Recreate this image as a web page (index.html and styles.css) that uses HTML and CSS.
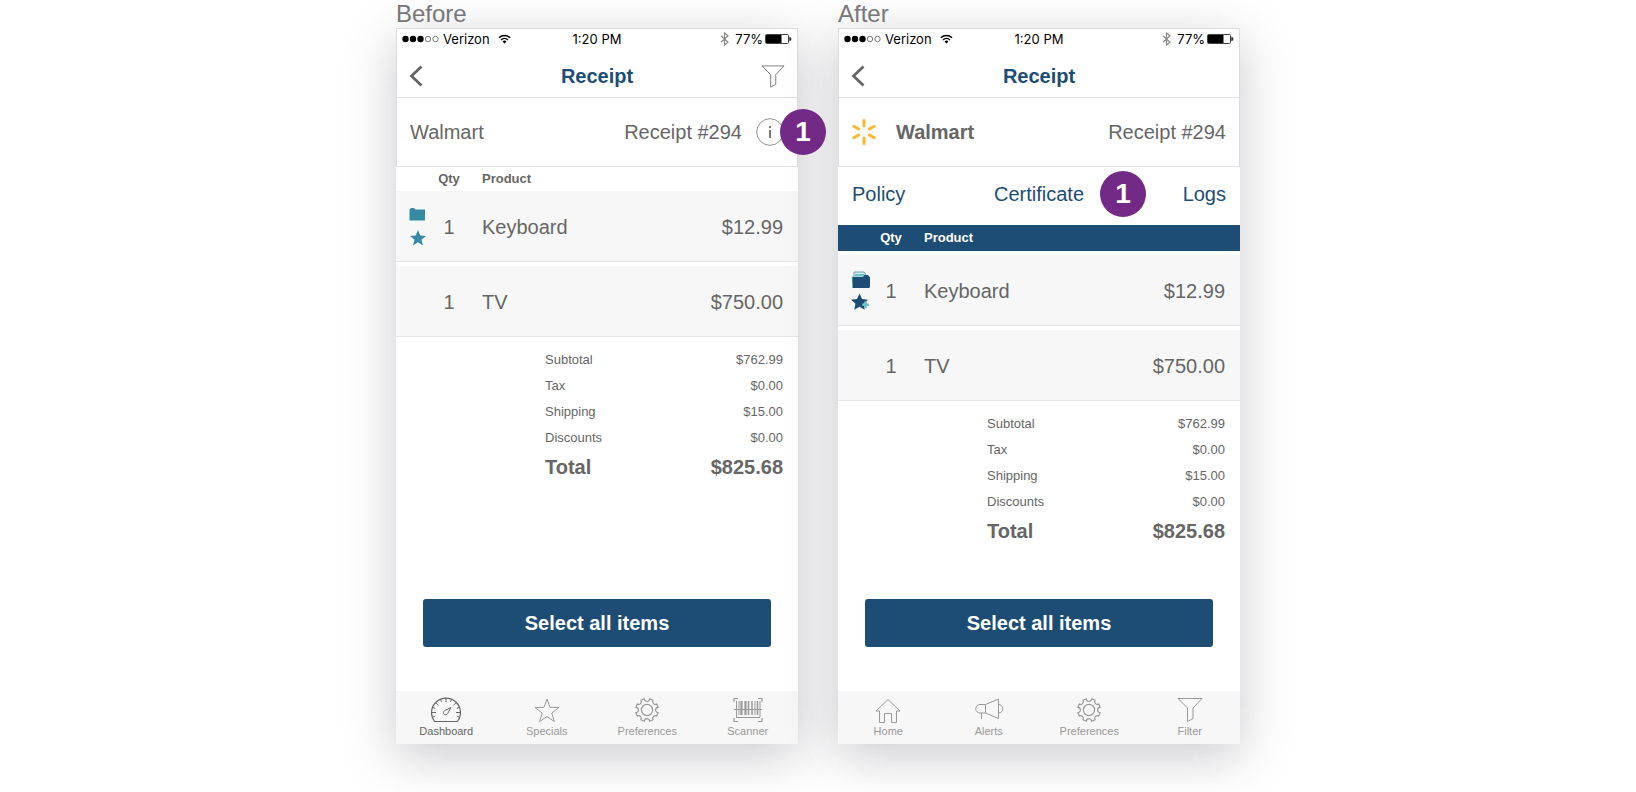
FILE: index.html
```
<!DOCTYPE html>
<html lang="en">

<head>
    <meta charset="UTF-8">
    <meta name="viewport" content="width=device-width, initial-scale=1.0">
    <title>Receipt - Before / After</title>
    <link rel="stylesheet" href="styles.css">
</head>

<body>
    <!-- Shared icons -->
    <svg class="sprite" aria-hidden="true">
        <symbol id="signal" viewBox="0 0 37 8">
            <g fill="#000">
                <circle cx="3.5" cy="4" r="3.2" />
                <circle cx="11" cy="4" r="3.2" />
                <circle cx="18.5" cy="4" r="3.2" />
            </g>
            <g fill="none" stroke="#555" stroke-width="0.8">
                <circle cx="26" cy="4" r="2.7" />
                <circle cx="33.5" cy="4" r="2.7" />
            </g>
        </symbol>
        <symbol id="wifi" viewBox="0 0 14 10">
            <g fill="none" stroke="#000" stroke-width="1.6">
                <path d="M1 3.6a8.6 8.6 0 0 1 12 0" />
                <path d="M3.3 6a5.4 5.4 0 0 1 7.4 0" />
            </g>
            <path d="M7 9.8L4.9 7.7a3 3 0 0 1 4.2 0z" />
        </symbol>
        <symbol id="bluetooth" viewBox="0 0 9 14">
            <path d="M1 3.8l7 6.4L4.5 13V1L8 3.8l-7 6.4" fill="none" stroke="#888" stroke-width="1.2" />
        </symbol>
        <symbol id="battery" viewBox="0 0 27 10">
            <rect x="0.5" y="0.5" width="23" height="9" rx="1" fill="none" stroke="#444" />
            <rect x="1" y="1" width="15.5" height="8" />
            <path d="M24.8 3.2a2 2 0 0 1 0 3.6z" stroke="#333" />
        </symbol>
        <symbol id="back" viewBox="0 0 14 22">
            <path d="M12.5 1.5L2.5 11l10 9.5" fill="none" stroke="#666" stroke-width="2.8" />
        </symbol>
        <symbol id="funnel" viewBox="0 0 26 25">
            <path d="M1 1h24l-9 9.5v10.5l-5.5 3V10.5z" fill="none" stroke="currentColor" />
        </symbol>
        <symbol id="gear" viewBox="0 0 24 24">
            <path d="M14.6 .8L18.1 2.3A2.6 2.6 0 0 0 21.7 5.9L23.2 9.4A2.6 2.6 0 0 0 23.2 14.6L21.7 18.1A2.6 2.6 0 0 0 18.1 21.7L14.6 23.2A2.6 2.6 0 0 0 9.4 23.2L5.9 21.7A2.6 2.6 0 0 0 2.3 18.1L.8 14.6A2.6 2.6 0 0 0 .8 9.4L2.3 5.9A2.6 2.6 0 0 0 5.9 2.3L9.4 .8A2.6 2.6 0 0 0 14.6 .8z" fill="none" stroke="currentColor" stroke-width="1.2" stroke-linejoin="round" />
            <circle cx="12" cy="12" r="5.6" fill="none" stroke="currentColor" stroke-width="1.2" />
        </symbol>
    </svg>

    <div class="compare">
        <!-- Before -->
        <section class="version">
            <h1>Before</h1>
            <div class="phone">
                <div class="top">
                    <div class="status">
                        <span class="carrier">
                            <svg width="37" height="8"><use href="#signal" /></svg>
                            Verizon
                            <svg class="wifi" width="13" height="10"><use href="#wifi" /></svg>
                        </span>
                        <span>1:20 PM</span>
                        <span class="power">
                            <svg class="bluetooth" width="9" height="14"><use href="#bluetooth" /></svg>
                            77%
                            <svg width="27" height="10"><use href="#battery" /></svg>
                        </span>
                    </div>
                    <header>
                        <button class="icon-button" aria-label="Back"><svg width="14" height="22"><use href="#back" /></svg></button>
                        <h2>Receipt</h2>
                        <button class="icon-button end" aria-label="Filter"><svg width="24" height="23"><use href="#funnel" /></svg></button>
                    </header>
                    <div class="store">
                        <span>Walmart</span>
                        <span class="number">Receipt #294</span>
                        <button class="icon-button info" aria-label="Info">
                            <svg width="28" height="28" viewBox="0 0 28 28">
                                <circle cx="14" cy="14" r="13.3" fill="none" stroke="#888" stroke-width="0.9" />
                                <rect x="13" y="8" width="2" height="2" fill="#777" />
                                <rect x="13" y="12" width="2" height="8" fill="#777" />
                            </svg>
                        </button>
                        <span class="badge">1</span>
                    </div>
                </div>

                <table class="items">
                    <thead>
                        <tr>
                            <th class="flags"></th>
                            <th class="qty">Qty</th>
                            <th>Product</th>
                            <th></th>
                        </tr>
                    </thead>
                    <tbody>
                        <tr>
                            <td class="flags">
                                <svg width="17" height="39" viewBox="0 0 17 39">
                                    <path d="M0.5 12.5v-11l1-1q2-1.500 4 0l1 1h9.5v11z" fill="#358ba3" />
                                    <path d="M9 22l2.200 5.600 5.800.4-4.500 3.700 1.500 5.800L9 34.300l-5 3.200 1.500-5.800L1 28l5.800-.4z" fill="#358ba3" />
                                </svg>
                            </td>
                            <td class="qty">1</td>
                            <td>Keyboard</td>
                            <td class="price">$12.99</td>
                        </tr>
                        <tr>
                            <td class="flags"></td>
                            <td class="qty">1</td>
                            <td>TV</td>
                            <td class="price">$750.00</td>
                        </tr>
                    </tbody>
                </table>

                <table class="totals">
                    <tr><th>Subtotal</th><td>$762.99</td></tr>
                    <tr><th>Tax</th><td>$0.00</td></tr>
                    <tr><th>Shipping</th><td>$15.00</td></tr>
                    <tr><th>Discounts</th><td>$0.00</td></tr>
                    <tr class="total"><th>Total</th><td>$825.68</td></tr>
                </table>

                <button class="select-all">Select all items</button>

                <nav class="tabbar">
                    <a href="#" class="active">
                        <svg width="30" height="26" viewBox="0 0 30 26" fill="none" stroke="currentColor">
                            <path d="M3.500 24.500a14.500 14.500 0 1 1 23 0z" stroke-width="1.200" />
                            <path d="M15 1v4M1 15.500h4M29 15.500h-4M9.500 2.500l1 2.200M20.500 2.500l-1 2.200M5 5.800l2.500 2.400M25 5.800l-2.500 2.400M2 10.500l2.200.8M28 10.500l-2.200.8M2 20l2.200-.8M28 20l-2.200-.8" />
                            <path d="M20 10.500l-6.500 3.200a2.200 2.200 0 1 0 3 3z" />
                        </svg>
                        Dashboard
                    </a>
                    <a href="#">
                        <svg width="26" height="26" viewBox="0 0 26 26" fill="none" stroke="currentColor">
                            <path d="M13 2l3 8.300 9 .2-7.200 5.500 2.600 8.600-7.400-5.100-7.400 5.100 2.600-8.600L1 10.500l9-.2z" />
                        </svg>
                        Specials
                    </a>
                    <a href="#">
                        <svg width="24" height="26"><use href="#gear" /></svg>
                        Preferences
                    </a>
                    <a href="#">
                        <svg width="30" height="26" viewBox="0 0 30 26" fill="none" stroke="currentColor">
                            <path d="M1 5V1.500h4M25 1.500h4V5M29 21v3.500h-4M5 24.500H1V21" stroke-width="1.200" />
                            <path d="M1 12.500h28M3 20.500h24" />
                            <path d="M3.500 4v16M27 4v16M6 4v14M22 4v14" />
                            <path d="M8.500 4v14M12.500 4v14" stroke-width="2.200" />
                            <path d="M15.500 4v14M19 4v14M24.500 4v14" stroke-width="1.500" />
                        </svg>
                        Scanner
                    </a>
                </nav>
            </div>
        </section>

        <!-- After -->
        <section class="version after">
            <h1>After</h1>
            <div class="phone">
                <div class="top">
                    <div class="status">
                        <span class="carrier">
                            <svg width="37" height="8"><use href="#signal" /></svg>
                            Verizon
                            <svg class="wifi" width="13" height="10"><use href="#wifi" /></svg>
                        </span>
                        <span>1:20 PM</span>
                        <span class="power">
                            <svg class="bluetooth" width="9" height="14"><use href="#bluetooth" /></svg>
                            77%
                            <svg width="27" height="10"><use href="#battery" /></svg>
                        </span>
                    </div>
                    <header>
                        <button class="icon-button" aria-label="Back"><svg width="14" height="22"><use href="#back" /></svg></button>
                        <h2>Receipt</h2>
                    </header>
                    <div class="store">
                        <svg class="spark" width="24" height="26" viewBox="0 0 24 26" stroke="#fdb92e" stroke-width="3" stroke-linecap="round">
                            <path d="M12 1.500v5.500M12 19v5.500M1.800 7.200l4.800 2.800M17.400 16l4.800 2.800M22.200 7.200l-4.800 2.800M6.600 16l-4.800 2.800" />
                        </svg>
                        <strong>Walmart</strong>
                        <span class="number">Receipt #294</span>
                    </div>
                </div>

                <div class="links">
                    <a href="#">Policy</a>
                    <a href="#">Certificate</a>
                    <a href="#">Logs</a>
                    <span class="badge">1</span>
                </div>

                <table class="items">
                    <thead>
                        <tr>
                            <th class="flags"></th>
                            <th class="qty">Qty</th>
                            <th>Product</th>
                            <th></th>
                        </tr>
                    </thead>
                    <tbody>
                        <tr>
                            <td class="flags">
                                <svg width="20" height="40" viewBox="0 0 20 40">
                                    <path d="M3 1h10l2 3v3H3z" fill="#d3ecec" stroke="#4e8ca5" stroke-width="0.800" />
                                    <path d="M4 3h9.500v2.500H4z" fill="#6cc5c4" />
                                    <path d="M0.500 5.500h3l-1 11z" fill="#6cc5c4" />
                                    <path d="M1.500 17V6H12l1.500-2h3.500l1.500 2h.5v10l-.8 1z" fill="#1d4d74" />
                                    <path d="M8.500 22.500l2.500 5.500 6 .7-4.500 4 1.300 6-5.300-3-5.300 3 1.300-6-4.500-4 6-.7z" fill="#1d4d74" />
                                    <path d="M14.500 30.500v6.500M11.300 33.800h6.400" stroke="#6cc5c4" stroke-width="2.600" />
                                </svg>
                            </td>
                            <td class="qty">1</td>
                            <td>Keyboard</td>
                            <td class="price">$12.99</td>
                        </tr>
                        <tr>
                            <td class="flags"></td>
                            <td class="qty">1</td>
                            <td>TV</td>
                            <td class="price">$750.00</td>
                        </tr>
                    </tbody>
                </table>

                <table class="totals">
                    <tr><th>Subtotal</th><td>$762.99</td></tr>
                    <tr><th>Tax</th><td>$0.00</td></tr>
                    <tr><th>Shipping</th><td>$15.00</td></tr>
                    <tr><th>Discounts</th><td>$0.00</td></tr>
                    <tr class="total"><th>Total</th><td>$825.68</td></tr>
                </table>

                <button class="select-all">Select all items</button>

                <nav class="tabbar">
                    <a href="#">
                        <svg width="26" height="26" viewBox="0 0 26 26" fill="none" stroke="currentColor">
                            <path d="M13 2.500L25 14h-3.500v11.500h-5v-9h-7v9h-5V14H1z" />
                        </svg>
                        Home
                    </a>
                    <a href="#">
                        <svg width="30" height="26" viewBox="0 0 30 26" fill="none" stroke="currentColor">
                            <path d="M11.500 7.500H6a4.200 4.200 0 0 0 0 8.500h5.500zM11.500 7.500L24.500 2v19.500L11.500 16M24.500 7.500a4 4 0 0 1 0 8.500M7.500 16v6" />
                        </svg>
                        Alerts
                    </a>
                    <a href="#">
                        <svg width="24" height="26"><use href="#gear" /></svg>
                        Preferences
                    </a>
                    <a href="#">
                        <svg width="26" height="26"><use href="#funnel" /></svg>
                        Filter
                    </a>
                </nav>
            </div>
        </section>
    </div>
</body>

</html>
```

FILE: styles.css
```
* {
    box-sizing: border-box;
}

body {
    margin: 0;
    background-color: #fff;
    color: #666;
    font-family: "Liberation Sans", Arial, sans-serif;
    font-size: 20px;
}

.sprite {
    position: absolute;
    width: 0;
    height: 0;
}

.compare {
    display: flex;
    justify-content: center;
    gap: 40px;
    min-height: 100vh;
    padding-bottom: 48px;
    overflow: hidden;
}

.version {
    display: flex;
    flex-direction: column;
    flex: 1;
    max-width: 402px;
}

h1 {
    position: relative;
    z-index: 1;
    margin: 0;
    font-size: 24px;
    font-weight: normal;
    line-height: 28px;
    color: #777;
}

.phone {
    display: flex;
    flex-direction: column;
    flex: 1;
    background-color: #fff;
    box-shadow: 0 12px 48px rgba(50, 50, 65, 0.26);
}

.top {
    border: 1px solid #ddd;
    border-bottom: none;
}

/* iOS status bar */
.status {
    display: grid;
    grid-template-columns: 1fr auto 1fr;
    align-items: center;
    height: 20px;
    padding: 0 5px;
    font-family: Inter, sans-serif;
    font-size: 13px;
    color: #000;
}

.carrier,
.power {
    display: flex;
    align-items: center;
    gap: 4px;
}

.power {
    gap: 2px;
    justify-content: flex-end;
}

.bluetooth {
    margin-right: 4px;
}

.wifi {
    margin-left: 4px;
}

header {
    display: grid;
    grid-template-columns: 1fr auto 1fr;
    align-items: center;
    height: 49px;
    padding: 6px 12px 0;
    border-bottom: 1px solid #e3e3e3;
}

h2 {
    margin: 0;
    font-size: 20px;
    color: #1d4d74;
}

.icon-button {
    display: flex;
    justify-self: start;
    padding: 0;
    border: none;
    background: none;
    color: #777;
    cursor: pointer;
}

.icon-button.end {
    justify-self: end;
}

.store {
    position: relative;
    display: flex;
    align-items: center;
    height: 69px;
    padding: 0 13px;
    border-bottom: 1px solid #e3e3e3;
}

.number {
    margin-left: auto;
}

.info {
    margin-left: 14px;
}

.spark {
    margin-right: 20px;
}

.badge {
    position: absolute;
    display: flex;
    align-items: center;
    justify-content: center;
    width: 46px;
    height: 46px;
    border-radius: 50%;
    background-color: #722a86;
    color: #fff;
    font-size: 28px;
    font-weight: bold;
}

.store .badge {
    right: -29px;
}

.links {
    position: relative;
    display: grid;
    grid-template-columns: 1fr auto 1fr;
    align-items: center;
    height: 54px;
    padding: 0 14px;
}

.links a {
    color: #1d4d74;
    text-decoration: none;
}

.links a:nth-of-type(3) {
    justify-self: end;
}

.links .badge {
    right: 94px;
}

/* Products */
.items {
    width: 100%;
    border-spacing: 0 4px;
    table-layout: fixed;
}

.items th {
    height: 16px;
    padding: 0;
    font-size: 13px;
    line-height: 16px;
    text-align: left;
}

.after .items th {
    height: 26px;
    background-color: #1d4d74;
    color: #fff;
}

.items td {
    height: 71px;
    padding: 2px 0 0;
    background-color: #f7f7f7;
    border-bottom: 1px solid #e6e6e6;
}

.items .flags {
    width: 38px;
    padding-left: 13px;
}

.items .flags svg {
    display: block;
}

.items .qty {
    width: 48px;
    padding-right: 18px;
    text-align: center;
}

.items .price {
    padding-right: 15px;
    text-align: right;
}

/* Totals */
.totals {
    margin: 5px 15px 0 149px;
    border-spacing: 0;
    font-size: 13px;
}

.totals th,
.totals td {
    height: 26px;
    padding: 0;
    font-weight: normal;
    text-align: left;
}

.totals td {
    text-align: right;
}

.totals .total th,
.totals .total td {
    height: 34px;
    font-size: 20px;
    font-weight: bold;
}

.select-all {
    height: 48px;
    margin: auto 27px 44px;
    border: none;
    border-radius: 3px;
    background-color: #1d4d74;
    color: #fff;
    font-family: inherit;
    font-size: 20px;
    font-weight: bold;
    cursor: pointer;
}

.tabbar {
    display: grid;
    grid-template-columns: repeat(4, 1fr);
    height: 53px;
    padding-top: 6px;
    background-color: #f7f7f7;
}

.tabbar a {
    display: flex;
    flex-direction: column;
    align-items: center;
    gap: 2px;
    color: #999;
    font-size: 11px;
    line-height: 13px;
    text-decoration: none;
}

.tabbar .active {
    color: #666;
}
```
